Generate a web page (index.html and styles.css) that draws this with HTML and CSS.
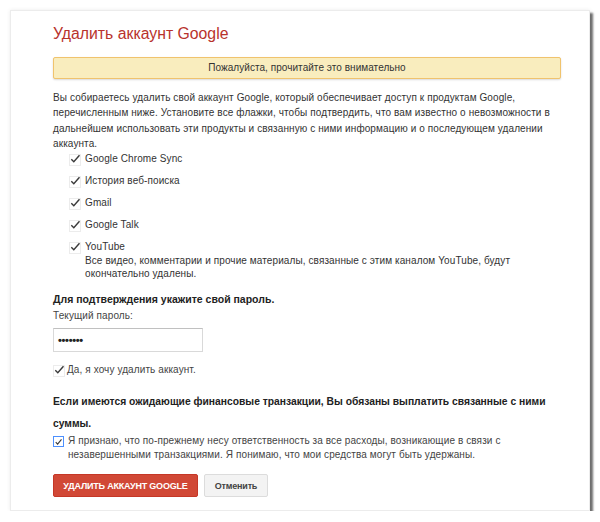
FILE: index.html
```html
<!DOCTYPE html>
<html lang="ru">
<head>
<meta charset="utf-8">
<link rel="stylesheet" href="styles.css">
</head>
<body>
<div class="card">
  <h1 class="title">Удалить аккаунт Google</h1>
  <div class="notice">Пожалуйста, прочитайте это внимательно</div>
  <p class="intro">Вы собираетесь удалить свой аккаунт Google, который обеспечивает доступ к продуктам Google, перечисленным ниже. Установите все флажки, чтобы подтвердить, что вам известно о невозможности в дальнейшем использовать эти продукты и связанную с ними информацию и о последующем удалении аккаунта.</p>
  <ul class="products">
    <li class="item"><span class="cb"><svg viewBox="0 0 12 12" width="12" height="12"><path d="M2.3 6.3 L4.8 8.8 L10.5 2.2" fill="none" stroke="#3a3a3a" stroke-width="1.4"/></svg></span><span>Google Chrome Sync</span></li>
    <li class="item"><span class="cb"><svg viewBox="0 0 12 12" width="12" height="12"><path d="M2.3 6.3 L4.8 8.8 L10.5 2.2" fill="none" stroke="#3a3a3a" stroke-width="1.4"/></svg></span><span>История веб-поиска</span></li>
    <li class="item"><span class="cb"><svg viewBox="0 0 12 12" width="12" height="12"><path d="M2.3 6.3 L4.8 8.8 L10.5 2.2" fill="none" stroke="#3a3a3a" stroke-width="1.4"/></svg></span><span>Gmail</span></li>
    <li class="item"><span class="cb"><svg viewBox="0 0 12 12" width="12" height="12"><path d="M2.3 6.3 L4.8 8.8 L10.5 2.2" fill="none" stroke="#3a3a3a" stroke-width="1.4"/></svg></span><span>Google Talk</span></li>
    <li class="item"><span class="cb"><svg viewBox="0 0 12 12" width="12" height="12"><path d="M2.3 6.3 L4.8 8.8 L10.5 2.2" fill="none" stroke="#3a3a3a" stroke-width="1.4"/></svg></span><span class="itemtext">YouTube<span class="sub">Все видео, комментарии и прочие материалы, связанные с этим каналом YouTube, будут окончательно удалены.</span></span></li>
  </ul>
  <div class="pwd-title">Для подтверждения укажите свой пароль.</div>
  <div class="pwd-label">Текущий пароль:</div>
  <div class="pwd-input">•••••••</div>
  <div class="confirm"><span class="cb"><svg viewBox="0 0 12 12" width="12" height="12"><path d="M2.3 6.3 L4.8 8.8 L10.5 2.2" fill="none" stroke="#3a3a3a" stroke-width="1.4"/></svg></span><span>Да, я хочу удалить аккаунт.</span></div>
  <div class="fin-title">Если имеются ожидающие финансовые транзакции, Вы обязаны выплатить связанные с ними суммы.</div>
  <div class="ack"><span class="cb cb-focus"><svg viewBox="0 0 12 12" width="10" height="10"><path d="M2.3 6.3 L4.8 8.8 L10 2.6" fill="none" stroke="#3a3a3a" stroke-width="1.5"/></svg></span><span>Я признаю, что по-прежнему несу ответственность за все расходы, возникающие в связи с незавершенными транзакциями. Я понимаю, что мои средства могут быть удержаны.</span></div>
  <div class="buttons">
    <button class="btn btn-red">УДАЛИТЬ АККАУНТ GOOGLE</button>
    <button class="btn btn-gray">Отменить</button>
  </div>
</div>
</body>
</html>
```
FILE: styles.css
```css
html, body {
  margin: 0;
  padding: 0;
  background: #ffffff;
}
body {
  font-family: "Liberation Sans", Arial, sans-serif;
  color: #333;
  padding: 10px 0 0 10px;
}
.card {
  width: 580px;
  height: 501px;
  box-sizing: border-box;
  background: #fff;
  border: 1px solid #ececec;
  box-shadow: 3px 3px 2px #6e6e6e, 0 0 4px rgba(0,0,0,0.08);
  padding: 13px 28px 0 42px;
  letter-spacing: 0.1px;
}
.title {
  margin: 0;
  font-size: 15.8px;
  font-weight: normal;
  color: #b8322c;
  line-height: 20px;
  letter-spacing: 0;
}
.notice {
  margin-top: 13px;
  height: 20px;
  line-height: 20px;
  background: #f9edbe;
  border: 1px solid #f0c36d;
  border-radius: 2px;
  text-align: center;
  font-size: 10px;
  letter-spacing: 0.05px;
  color: #333;
  box-shadow: 0 1px 2px rgba(0,0,0,0.15);
}
.intro {
  margin: 11px 0 0 0;
  font-size: 10px;
  line-height: 15.3px;
  color: #333;
}
.products {
  list-style: none;
  margin: 0;
  padding: 0 0 0 16px;
}
.item {
  display: flex;
  align-items: flex-start;
  font-size: 10px;
  line-height: 14px;
  margin-top: 8px;
}
.item:first-child { margin-top: 1px; }
.cb {
  flex: none;
  position: relative;
  width: 12px;
  height: 12px;
  margin-right: 4px;
  margin-top: 1px;
  display: inline-flex;
  align-items: center;
  justify-content: center;
}
.cb::before {
  content: "";
  position: absolute;
  left: 0;
  top: 1px;
  width: 10px;
  height: 10px;
  border: 1px solid #ececec;
}
.cb svg { display: block; position: relative; }
.itemtext { display: block; }
.sub {
  display: block;
  line-height: 13px;
}
.pwd-title {
  margin-top: 12px;
  font-size: 10.5px;
  font-weight: bold;
  line-height: 14px;
  color: #222;
  letter-spacing: 0;
}
.pwd-label {
  margin-top: 3px;
  font-size: 10px;
  line-height: 14px;
  color: #444;
}
.pwd-input {
  margin-top: 5px;
  width: 150px;
  height: 24px;
  box-sizing: border-box;
  border: 1px solid #d9d9d9;
  border-top-color: #c0c0c0;
  padding-left: 4px;
  font-size: 11px;
  font-weight: bold;
  line-height: 22px;
  letter-spacing: -0.3px;
  color: #222;
}
.confirm {
  display: flex;
  margin-top: 11px;
  font-size: 10px;
  line-height: 14px;
  color: #444;
}
.confirm .cb { margin-right: 2px; }
.fin-title {
  margin-top: 14px;
  font-size: 10.3px;
  font-weight: bold;
  line-height: 22px;
  color: #222;
  letter-spacing: 0;
}
.ack {
  display: flex;
  margin-top: -1px;
  font-size: 10px;
  line-height: 14px;
  color: #444;
}
.cb-focus {
  width: 11px;
  height: 11px;
  border: 1px solid #4d90fe;
  box-sizing: border-box;
  margin-right: 4px;
  margin-top: 2px;
}
.cb-focus::before { display: none; }
.buttons {
  margin-top: 12px;
  display: flex;
  gap: 6px;
}
.btn {
  height: 23px;
  font-family: "Liberation Sans", Arial, sans-serif;
  font-size: 9px;
  font-weight: bold;
  border-radius: 2px;
  padding: 0;
  letter-spacing: -0.2px;
}
.btn-red {
  width: 145px;
  background: #d14836;
  border: 1px solid #c53727;
  color: #fff;
}
.btn-gray {
  width: 64px;
  background: #f3f3f3;
  border: 1px solid #dcdcdc;
  color: #444;
}
```
